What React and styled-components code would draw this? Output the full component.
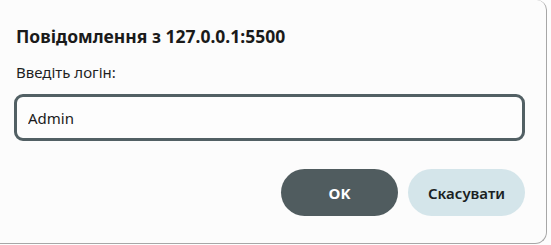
import React, { useState } from 'react';
import styled, { createGlobalStyle } from 'styled-components';

const GlobalStyle = createGlobalStyle`
  html, body {
    margin: 0;
    padding: 0;
    background: #fdfdfd;
  }
  body {
    font-family: "Noto Sans", "Open Sans", sans-serif;
    color: #1b1b1b;
  }
`;

const Dialog = styled.div`
  box-sizing: border-box;
  width: 547px;
  height: 244px;
  background: #fcfcfc;
  border-right: 1px solid #a7a7a7;
  border-bottom: 1px solid #a7a7a7;
  border-radius: 0 10px 12px 0;
  padding: 24px 21px 0 14px;
  display: flex;
  flex-direction: column;
`;

const Title = styled.h1`
  margin: 0 0 0 2px;
  font-size: 17.5px;
  font-weight: 700;
  line-height: 24px;
  color: #1a1a1a;
`;

const Label = styled.label`
  margin: 14px 0 0 2px;
  font-size: 15px;
  line-height: 20px;
  color: #1f1f1f;
`;

const Input = styled.input`
  box-sizing: border-box;
  margin-top: 12px;
  width: 511px;
  height: 47px;
  border: 3px solid #526064;
  border-radius: 9px;
  padding-left: 11px;
  padding-right: 11px;
  background: #fdfdfd;
  font-family: "Noto Sans", "Open Sans", sans-serif;
  font-size: 15px;
  color: #1a1a1a;
  outline: none;
`;

const Actions = styled.div`
  display: flex;
  justify-content: flex-end;
  gap: 10px;
  margin-top: 28px;
  width: 511px;
`;

const Button = styled.button`
  width: 117px;
  height: 47px;
  border: none;
  border-radius: 24px;
  font-family: "Noto Sans", "Open Sans", sans-serif;
  font-size: 15px;
  font-weight: ${p => (p.$primary ? 700 : 600)};
  background: ${p => (p.$primary ? '#505c5f' : '#d4e5ea')};
  color: ${p => (p.$primary ? '#ffffff' : '#1a1f22')};
  cursor: pointer;
`;

const App = () => {
  const [value, setValue] = useState('Admin');

  return (
    <>
      <GlobalStyle />
      <Dialog>
        <Title>Повідомлення з 127.0.0.1:5500</Title>
        <Label htmlFor="login">Введіть логін:</Label>
        <Input id="login" value={value} onChange={e => setValue(e.target.value)} />
        <Actions>
          <Button $primary>OK</Button>
          <Button>Скасувати</Button>
        </Actions>
      </Dialog>
    </>
  );
};

export default App;
